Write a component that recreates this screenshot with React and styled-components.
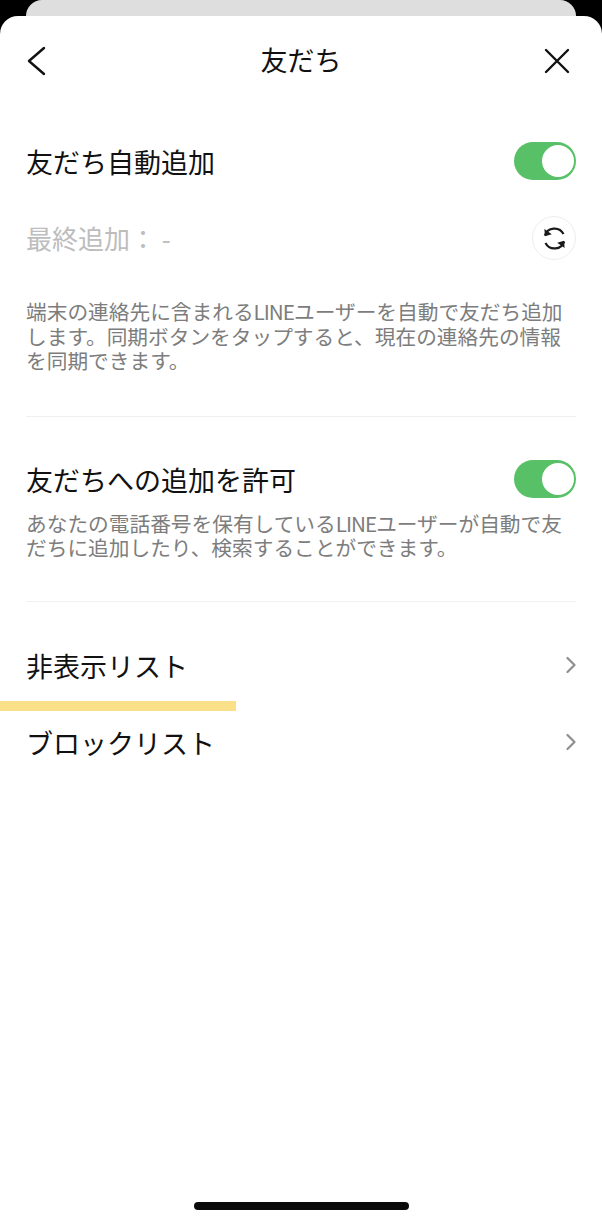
import React from "react";
import styled, { createGlobalStyle } from "styled-components";

const GlobalStyle = createGlobalStyle`
  html, body {
    margin: 0;
    padding: 0;
    background: #000;
  }
  body {
    font-family: "Noto Sans CJK JP", "Noto Sans", sans-serif;
  }
`;

const Screen = styled.div`
  width: 602px;
  height: 1223px;
  overflow: hidden;
  background: #000;
  display: flex;
  flex-direction: column;
`;

const BackCard = styled.div`
  flex: none;
  height: 16px;
  margin: 0 26px;
  background: #dedede;
  border-radius: 18px 18px 0 0;
`;

const Sheet = styled.main`
  position: relative;
  flex: 1;
  background: #fff;
  border-radius: 18px 18px 0 0;
  padding: 0 26px;
  display: flex;
  flex-direction: column;
`;

const NavBar = styled.header`
  height: 90px;
  display: flex;
  align-items: center;
  justify-content: space-between;
`;

const NavTitle = styled.h1`
  margin: 0 0 2px;
  font-size: 27px;
  line-height: 36px;
  font-weight: 400;
  color: #111;
`;

const NavButton = styled.button`
  width: 38px;
  height: 36px;
  padding: 0;
  border: 0;
  background: none;
  display: flex;
  align-items: center;
  justify-content: flex-start;
  svg {
    display: block;
  }
`;

const CloseButton = styled(NavButton)`
  width: 32px;
  margin-right: 6px;
  justify-content: flex-end;
`;

const Section = styled.section`
  padding-top: ${(p) => p.$top}px;
  padding-bottom: ${(p) => p.$bottom}px;
  border-bottom: ${(p) => (p.$divider ? "1px solid #f0f0f0" : "0")};
`;

const Row = styled.div`
  display: flex;
  align-items: center;
  justify-content: space-between;
  height: ${(p) => p.$height || 40}px;
  margin-top: ${(p) => p.$top || 0}px;
`;

const Label = styled.span`
  font-size: 27px;
  line-height: 40px;
  color: #111;
`;

const SwitchLabel = styled(Label)`
  padding-top: 2px;
`;

const MutedLabel = styled(Label)`
  font-size: 26px;
  color: #bdbdbd;
`;

const Toggle = styled.div`
  width: 62px;
  height: 38px;
  box-sizing: border-box;
  padding: 3px 2px 3px 0;
  border-radius: 19px;
  background: #58c066;
  display: flex;
  justify-content: flex-end;
`;

const Knob = styled.div`
  width: 32px;
  height: 32px;
  border-radius: 50%;
  background: #fff;
`;

const SyncButton = styled.button`
  width: 44px;
  height: 44px;
  padding: 0;
  border: 1px solid #eeeeee;
  border-radius: 50%;
  background: #fff;
  display: flex;
  align-items: center;
  justify-content: center;
`;

const Description = styled.p`
  margin: ${(p) => p.$top || 0}px 0 0;
  font-size: 20.7px;
  line-height: 24.5px;
  color: #7d7d7d;
  white-space: nowrap;
`;

const Latin = styled.span`
  letter-spacing: -1px;
`;

const LinkRow = styled.div`
  height: 77px;
  display: flex;
  align-items: center;
  justify-content: space-between;
  svg {
    margin-bottom: 2px;
  }
`;

const LinkList = styled.nav`
  padding-top: 26px;
`;

const Highlight = styled.div`
  position: absolute;
  left: 0;
  top: 685px;
  width: 236px;
  height: 10px;
  background: #fbe08a;
`;

const HomeIndicator = styled.div`
  position: absolute;
  left: 194px;
  bottom: 13px;
  width: 215px;
  height: 8px;
  border-radius: 4px;
  background: #0a0a0a;
`;

const Chevron = () => (
  <svg width="12" height="18" viewBox="0 0 12 18" fill="none">
    <path d="M3.5 2l7 7-7 7" stroke="#8f8f8f" strokeWidth="2.2" strokeLinecap="round" strokeLinejoin="round" />
  </svg>
);

const SyncIcon = () => (
  <svg width="27" height="27" viewBox="0 0 24 24" fill="none" stroke="#1a1a1a" strokeWidth="2">
    <path d="M3.4 9.5A9 9 0 0 1 20 8" />
    <path d="M20.6 14.5A9 9 0 0 1 4 16" />
    <path d="M3 3.5l.6 6.4 6-1.6" fill="#1a1a1a" stroke="none" />
    <path d="M21 20.5l-.6-6.4-6 1.6" fill="#1a1a1a" stroke="none" />
  </svg>
);

export default function App() {
  return (
    <>
      <GlobalStyle />
      <Screen>
        <BackCard />
        <Sheet>
          <NavBar>
            <NavButton>
              <svg width="20" height="30" viewBox="0 0 20 30" fill="none">
                <path d="M18 2L3 15l15 13" stroke="#111" strokeWidth="2.4" strokeLinecap="round" strokeLinejoin="round" />
              </svg>
            </NavButton>
            <NavTitle>友だち</NavTitle>
            <CloseButton>
              <svg width="26" height="26" viewBox="0 0 26 26" fill="none">
                <path d="M2 2l22 22M24 2L2 24" stroke="#111" strokeWidth="2.4" strokeLinecap="round" />
              </svg>
            </CloseButton>
          </NavBar>

          <Section $top={35} $bottom={43} $divider>
            <Row>
              <SwitchLabel>友だち自動追加</SwitchLabel>
              <Toggle>
                <Knob />
              </Toggle>
            </Row>
            <Row $height={44} $top={35}>
              <MutedLabel>最終追加： -</MutedLabel>
              <SyncButton>
                <SyncIcon />
              </SyncButton>
            </Row>
            <Description $top={39}>
              端末の連絡先に含まれる<Latin>LINE</Latin>ユーザーを自動で友だち追加
              <br />
              します。同期ボタンをタップすると、現在の連絡先の情報
              <br />
              を同期できます。
            </Description>
          </Section>

          <Section $top={42} $bottom={41} $divider>
            <Row>
              <SwitchLabel>友だちへの追加を許可</SwitchLabel>
              <Toggle>
                <Knob />
              </Toggle>
            </Row>
            <Description $top={12}>
              あなたの電話番号を保有している<Latin>LINE</Latin>ユーザーが自動で友
              <br />
              だちに追加したり、検索することができます。
            </Description>
          </Section>

          <LinkList>
            <LinkRow>
              <Label>非表示リスト</Label>
              <Chevron />
            </LinkRow>
            <LinkRow>
              <Label>ブロックリスト</Label>
              <Chevron />
            </LinkRow>
          </LinkList>

          <Highlight />
          <HomeIndicator />
        </Sheet>
      </Screen>
    </>
  );
}
